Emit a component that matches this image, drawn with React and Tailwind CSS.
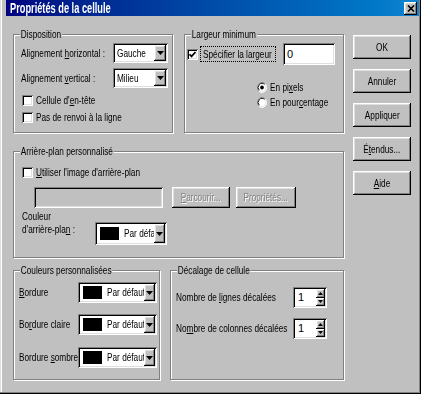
import React from "react";

const raised =
  "bg-[#c0c0c0] shadow-[inset_-1px_-1px_0_#000,inset_1px_1px_0_#fff,inset_-2px_-2px_0_#808080,inset_2px_2px_0_#dfdfdf]";
const sunken =
  "shadow-[inset_1px_1px_0_#808080,inset_-1px_-1px_0_#fff,inset_2px_2px_0_#000,inset_-2px_-2px_0_#dfdfdf]";

// the screenshot is squeezed sideways, so the text is too
function T({ children, className = "origin-left" }) {
  return <span className={`inline-block whitespace-nowrap scale-x-[0.75] ${className}`}>{children}</span>;
}

function Arrow() {
  return (
    <svg width="7" height="4" viewBox="0 0 7 4">
      <path d="M0 0h7L3.5 4z" fill="#000" />
    </svg>
  );
}

function Group({ label, className, children }) {
  return (
    <div
      className={`relative border border-[#808080] shadow-[inset_1px_1px_0_#fff,1px_1px_0_#fff] ${className}`}
    >
      <span className="absolute -top-[7px] left-[6px] origin-left scale-x-[0.75] whitespace-nowrap bg-[#c0c0c0] px-[1px] leading-[12px]">
        {label}
      </span>
      {children}
    </div>
  );
}

function Select({ value }) {
  return (
    <div className={`flex h-[20px] w-[55px] bg-white p-[2px] ${sunken}`}>
      <div className="flex-1 overflow-hidden pl-[2px] leading-[16px]">
        <T>{value}</T>
      </div>
      <div className={`flex w-[12px] items-center justify-center ${raised}`}>
        <Arrow />
      </div>
    </div>
  );
}

function ColorSelect({ className }) {
  return (
    <div className={`flex bg-white p-[2px] ${sunken} ${className}`}>
      <div className="flex flex-1 items-center overflow-hidden">
        <div className="ml-[3px] h-[13px] w-[19px] shrink-0 bg-black" />
        <span className="ml-[5px]">
          <T>Par défaut</T>
        </span>
      </div>
      <div className={`flex w-[11px] shrink-0 items-center justify-center ${raised}`}>
        <Arrow />
      </div>
    </div>
  );
}

function Spin() {
  return (
    <div className={`flex h-[21px] w-[34px] bg-white p-[2px] ${sunken}`}>
      <div className="flex-1 pl-[3px] leading-[17px]">1</div>
      <div className="flex w-[9px] flex-col">
        <div className={`flex flex-1 items-center justify-center ${raised}`}>
          <svg width="5" height="3" viewBox="0 0 5 3">
            <path d="M0 3h5L2.5 0z" fill="#000" />
          </svg>
        </div>
        <div className={`flex flex-1 items-center justify-center ${raised}`}>
          <svg width="5" height="3" viewBox="0 0 5 3">
            <path d="M0 0h5L2.5 3z" fill="#000" />
          </svg>
        </div>
      </div>
    </div>
  );
}

function Check({ checked }) {
  return (
    <div className={`flex h-[11px] w-[11px] shrink-0 items-center justify-center bg-white ${sunken}`}>
      {checked && (
        <svg width="7" height="7" viewBox="0 0 7 7">
          <path d="M0.5 3.2l2 2.2L6.5 1" stroke="#000" strokeWidth="1.7" fill="none" />
        </svg>
      )}
    </div>
  );
}

function Radio({ checked }) {
  return (
    <svg width="10" height="11" viewBox="0 0 12 12" preserveAspectRatio="none" className="shrink-0">
      <circle cx="6" cy="6" r="5.5" fill="#fff" />
      <path d="M2.1 9.9A5.5 5.5 0 0 1 9.9 2.1" stroke="#808080" fill="none" />
      <path d="M2.8 9.2A4.5 4.5 0 0 1 9.2 2.8" stroke="#000" fill="none" />
      <path d="M2.1 9.9A5.5 5.5 0 0 0 9.9 2.1" stroke="#fff" fill="none" />
      <path d="M2.8 9.2A4.5 4.5 0 0 0 9.2 2.8" stroke="#dfdfdf" fill="none" />
      {checked && <circle cx="6" cy="6" r="2.2" fill="#000" />}
    </svg>
  );
}

function Btn({ children, disabled, className = "w-[58px] h-[24px]" }) {
  return (
    <div
      className={`flex items-center justify-center ${raised} ${className} ${
        disabled ? "text-[#808080] [text-shadow:1px_1px_0_#fff]" : ""
      }`}
    >
      <T className="origin-center">{children}</T>
    </div>
  );
}

export default function App() {
  return (
    <div className="h-[398px] w-[423px] overflow-hidden bg-white font-['Liberation_Sans',Arial,sans-serif] text-[11px] text-black">
      <div className="flex h-[394px] w-[421px] flex-col bg-[#c0c0c0] shadow-[inset_-1px_-1px_0_#000,inset_-2px_-2px_0_#808080,inset_1px_0_0_#dfdfdf,inset_2px_0_0_#fff]">
        <div className="ml-[6px] mr-[2px] flex h-[16px] items-center justify-between bg-linear-to-r from-[#000080] to-[#1084d0] pl-[4px] pr-[2px]">
          <span className="inline-block origin-left scale-x-[0.66] whitespace-nowrap text-[14px] font-bold leading-[15px] text-white">
            Propriétés de la cellule
          </span>
          <div className={`flex h-[13px] w-[13px] items-center justify-center ${raised}`}>
            <svg width="8" height="7" viewBox="0 0 8 7">
              <path d="M1 0.5l6 6M7 0.5l-6 6" stroke="#000" strokeWidth="1.6" />
            </svg>
          </div>
        </div>

        <div className="flex pl-[13px] pt-[18px]">
          <div className="flex w-[331px] flex-col">
            <div className="flex gap-[11px]">
              <Group label="Disposition" className="h-[99px] w-[160px] pt-[8px]">
                <div className="flex h-[20px] items-center">
                  <span className="w-[99px] pl-[7px]">
                    <T>
                      Alignement <u>h</u>orizontal :
                    </T>
                  </span>
                  <Select value="Gauche" />
                </div>
                <div className="mt-[5px] flex h-[20px] items-center">
                  <span className="w-[99px] pl-[7px]">
                    <T>
                      Alignement <u>v</u>ertical :
                    </T>
                  </span>
                  <Select value="Milieu" />
                </div>
                <div className="mt-[6px] flex h-[13px] items-center gap-[3px] pl-[8px]">
                  <Check />
                  <T>
                    Cellule d'<u>e</u>n-tête
                  </T>
                </div>
                <div className="mt-[4px] flex h-[13px] items-center gap-[3px] pl-[8px]">
                  <Check />
                  <T>Pas de renvoi à la ligne</T>
                </div>
              </Group>

              <Group label="Largeur minimum" className="h-[99px] w-[160px] pt-[8px]">
                <div className="flex h-[22px] items-center pl-[2px]">
                  <Check checked />
                  <span className="ml-[2px] h-[16px] w-[76px] border border-dotted border-black pl-[2px] leading-[14px]">
                    <T>Spécifier la largeur</T>
                  </span>
                  <div className={`ml-auto mr-[8px] h-[22px] w-[52px] bg-white pl-[4px] leading-[22px] ${sunken}`}>
                    0
                  </div>
                </div>
                <div className="ml-[72px] mt-[16px] flex flex-col gap-[2px]">
                  <div className="flex h-[13px] items-center gap-[3px]">
                    <Radio checked />
                    <T>
                      En pi<u>x</u>els
                    </T>
                  </div>
                  <div className="flex h-[13px] items-center gap-[3px]">
                    <Radio />
                    <T>
                      En pour<u>c</u>entage
                    </T>
                  </div>
                </div>
              </Group>
            </div>

            <Group label="Arrière-plan personnalisé" className="mt-[18px] h-[107px] w-[331px] pt-[14px]">
              <div className="flex h-[13px] items-center gap-[3px] pl-[8px]">
                <Check />
                <T>
                  <u>U</u>tiliser l'image d'arrière-plan
                </T>
              </div>
              <div className="mt-[8px] flex h-[21px]">
                <div className={`ml-[20px] w-[129px] bg-[#c0c0c0] ${sunken}`} />
                <Btn disabled className="ml-[9px] h-[21px] w-[58px]">
                  <u>P</u>arcourir...
                </Btn>
                <Btn disabled className="ml-[6px] h-[21px] w-[60px]">
                  Propriétés...
                </Btn>
              </div>
              <div className="mt-[2px] flex">
                <div className="w-[81px] pl-[8px]">
                  <div className="inline-block origin-left scale-x-[0.75] whitespace-nowrap leading-[13px]">
                    Couleur
                    <br />
                    d'arrière-pla<u>n</u> :
                  </div>
                </div>
                <ColorSelect className="mt-[12px] h-[23px] w-[72px]" />
              </div>
            </Group>

            <div className="mt-[12px] flex gap-[10px]">
              <Group label="Couleurs personnalisées" className="h-[110px] w-[147px] pt-[11px]">
                <div className="flex h-[21px] items-center">
                  <span className="w-[64px] pl-[5px]">
                    <T>
                      <u>B</u>ordure
                    </T>
                  </span>
                  <ColorSelect className="h-[21px] w-[79px]" />
                </div>
                <div className="mt-[11px] flex h-[21px] items-center">
                  <span className="w-[64px] pl-[5px]">
                    <T>
                      Bo<u>r</u>dure claire
                    </T>
                  </span>
                  <ColorSelect className="h-[21px] w-[79px]" />
                </div>
                <div className="mt-[12px] flex h-[21px] items-center">
                  <span className="w-[64px] pl-[5px]">
                    <T>
                      Bordure <u>s</u>ombre
                    </T>
                  </span>
                  <ColorSelect className="h-[21px] w-[79px]" />
                </div>
              </Group>

              <Group label="Décalage de cellule" className="h-[110px] w-[174px] pt-[16px]">
                <div className="flex h-[21px] items-center">
                  <span className="w-[122px] pl-[5px]">
                    <T>
                      Nombre de <u>l</u>ignes décalées
                    </T>
                  </span>
                  <Spin />
                </div>
                <div className="mt-[10px] flex h-[21px] items-center">
                  <span className="w-[122px] pl-[5px]">
                    <T>
                      No<u>m</u>bre de colonnes décalées
                    </T>
                  </span>
                  <Spin />
                </div>
              </Group>
            </div>
          </div>

          <div className="ml-[9px] mt-[1px] flex flex-col gap-[10px]">
            <Btn>OK</Btn>
            <Btn>Annuler</Btn>
            <Btn>Appliquer</Btn>
            <Btn>
              É<u>t</u>endus...
            </Btn>
            <Btn>
              <u>A</u>ide
            </Btn>
          </div>
        </div>
      </div>
    </div>
  );
}
